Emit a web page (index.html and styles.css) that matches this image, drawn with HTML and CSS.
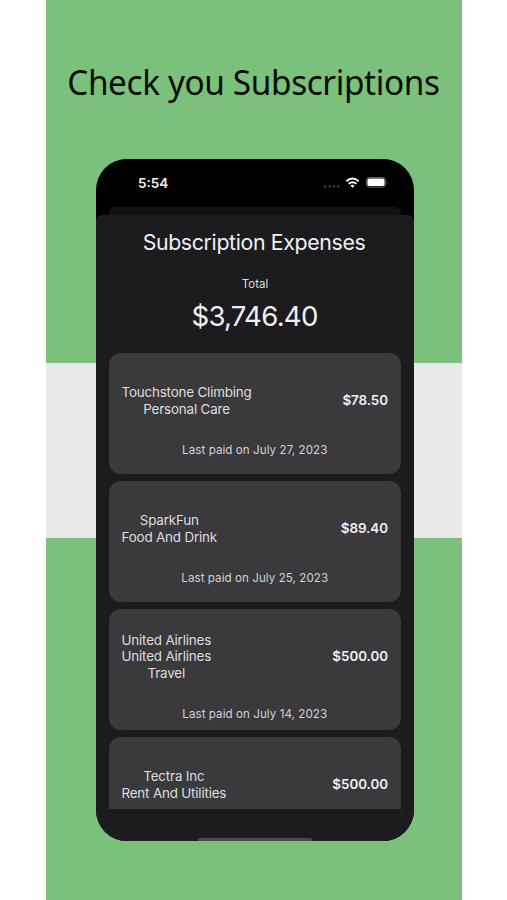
FILE: index.html
```
<!DOCTYPE html>
<html lang="en">
<head>
<meta charset="utf-8">
<title>Check you Subscriptions</title>
<link rel="stylesheet" href="styles.css">
</head>
<body>
<main class="poster">
  <h1 class="headline"><span>Check you Subscriptions</span></h1>
  <section class="phone">
    <header class="status">
      <span class="time">5:54</span>
      <svg class="status-icons" width="68" height="16" viewBox="0 0 68 16">
        <g fill="#444"><circle cx="3.2" cy="10.5" r="1.2"/><circle cx="7.6" cy="10.5" r="1.2"/><circle cx="12" cy="10.5" r="1.2"/><circle cx="16.4" cy="10.5" r="1.2"/></g>
        <g fill="none" stroke="#fff" stroke-width="1.9"><path d="M24.4 5.2Q30.5 -.2 36.7 5.2"/><path d="M26.7 7.8Q30.5 4.5 34.4 7.8"/></g>
        <path d="M28.5 9.6Q30.5 8.1 32.5 9.6L30.5 11.9Z" fill="#fff"/>
        <rect x="44.3" y="1.5" width="19.4" height="9.6" rx="2.8" fill="none" stroke="#6d6d6d" stroke-width=".9"/>
        <rect x="45.4" y="2.6" width="17.2" height="7.4" rx="1.8" fill="#fff"/>
        <path d="M65 4.9q1.4 1.4 0 2.8z" fill="#777"/>
      </svg>
    </header>
    <div class="back-sheet"></div>
    <div class="sheet">
      <h2 class="title">Subscription Expenses</h2>
      <p class="total-label">Total</p>
      <p class="total">$3,746.40</p>
      <div class="list">
        <article class="card">
          <div class="row"><p class="name">Touchstone Climbing<br>Personal Care</p><b class="amount">$78.50</b></div>
          <p class="paid">Last paid on July 27, 2023</p>
        </article>
        <article class="card">
          <div class="row"><p class="name">SparkFun<br>Food And Drink</p><b class="amount">$89.40</b></div>
          <p class="paid">Last paid on July 25, 2023</p>
        </article>
        <article class="card">
          <div class="row"><p class="name">United Airlines<br>United Airlines<br>Travel</p><b class="amount">$500.00</b></div>
          <p class="paid">Last paid on July 14, 2023</p>
        </article>
        <article class="card">
          <div class="row"><p class="name">Tectra Inc<br>Rent And Utilities</p><b class="amount">$500.00</b></div>
          <p class="paid"></p>
        </article>
      </div>
      <div class="home-bar"></div>
    </div>
  </section>
</main>
</body>
</html>
```
FILE: styles.css
```
* { box-sizing: border-box; }
body { margin: 0; background: #fff; font-family: Inter, "Liberation Sans", sans-serif; }
h1, h2, p { margin: 0; font-weight: 400; }
.poster {
  width: 416px;
  height: 900px;
  margin-left: 46px;
  overflow: hidden;
  background: linear-gradient(#7cc17b 363px, #e9e9e9 363px 538px, #7cc17b 538px);
}
.headline {
  height: 159px;
  padding: 58px 1px 0 0;
  text-align: center;
  white-space: nowrap;
  font: 400 35px/48px "Noto Sans", "Open Sans", sans-serif;
  letter-spacing: -0.4px;
  color: #050d05;
}
.headline span { display: inline-block; transform: scaleX(0.953); }
.phone {
  display: flex;
  flex-direction: column;
  width: 318px;
  height: 682px;
  margin-left: 50px;
  border-radius: 31px;
  overflow: hidden;
  background: #000;
}
.status {
  display: flex;
  justify-content: space-between;
  height: 48px;
  padding: 16px 24px 0 42px;
}
.time { font-size: 13.5px; line-height: 16px; font-weight: 600; color: #f4f4f4; }
.status-icons { margin-top: 1px; }
.back-sheet { height: 8px; margin: 0 13px; border-radius: 6px 6px 0 0; background: #131314; }
.sheet {
  display: flex;
  flex-direction: column;
  align-items: center;
  height: 626px;
  border-radius: 6px 6px 0 0;
  background: #1c1c1e;
  color: #f0f0f1;
}
.title { margin-top: 13px; padding-right: 2px; font-size: 21.3px; line-height: 28px; letter-spacing: -0.35px; white-space: nowrap; }
.total-label { margin-top: 20px; font-size: 11.5px; line-height: 16px; color: #dededf; }
.total { margin-top: 6px; padding-right: 1px; font-size: 27.6px; line-height: 36px; letter-spacing: -0.75px; }
.list {
  display: flex;
  flex-direction: column;
  gap: 7px;
  width: 292px;
  height: 455.5px;
  margin-top: 19px;
  overflow: hidden;
}
.card {
  display: flex;
  flex-direction: column;
  justify-content: center;
  flex: none;
  height: 121px;
  padding: 15px 13px 0 12.5px;
  border-radius: 12px;
  background: #3a3a3c;
}
.row { display: flex; justify-content: space-between; align-items: center; }
.name { font-size: 13.4px; line-height: 16.5px; letter-spacing: -0.18px; text-align: center; white-space: nowrap; color: #dededf; }
.amount { margin-top: -1px; font-size: 13.4px; line-height: 16px; font-weight: 600; letter-spacing: -0.05px; color: #f0f0f1; }
.paid { height: 16px; margin-top: 25px; font-size: 11.6px; line-height: 16px; letter-spacing: 0.06px; text-align: center; white-space: nowrap; color: #d2d2d4; }
.home-bar { width: 114px; height: 3px; margin-top: auto; border-radius: 2px 2px 0 0; background: #4b4b4d; }
```
